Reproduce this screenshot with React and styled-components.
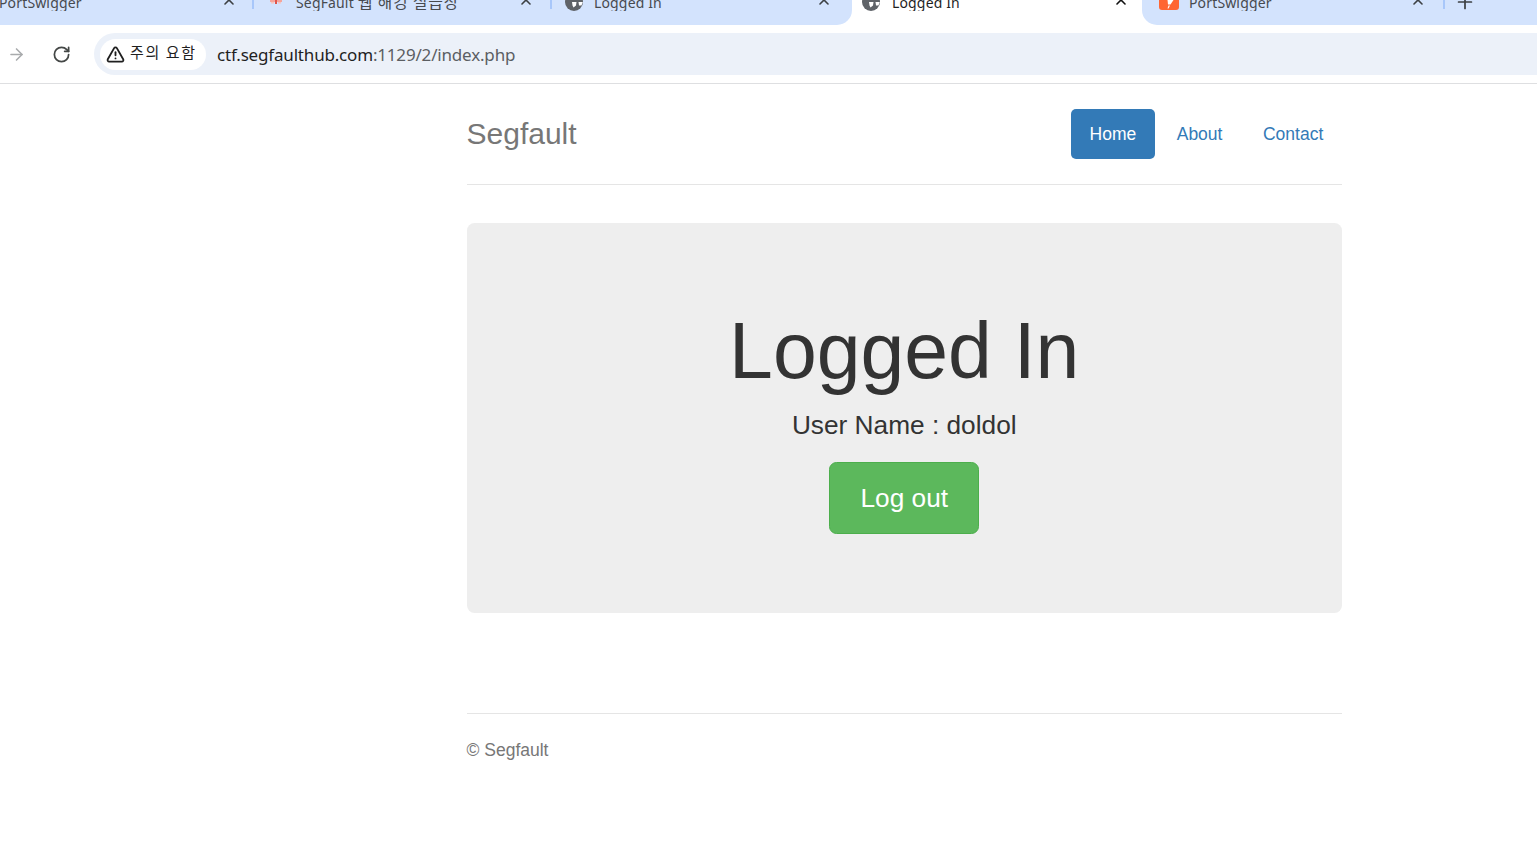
import React from "react";
import styled, { createGlobalStyle } from "styled-components";
import { ArrowRight, RotateCw, TriangleAlert, X, Plus } from "lucide-react";

const GlobalStyle = createGlobalStyle`
  html, body {
    margin: 0;
    padding: 0;
    background: #fff;
    overflow: hidden;
  }
  body {
    font-family: "Liberation Sans", Arial, sans-serif;
    color: #333;
  }
`;

const TabStrip = styled.div`
  display: flex;
  height: 25px;
  overflow: hidden;
  background: #fff;
`;

const TabGroup = styled.div`
  display: flex;
  flex: ${({ $grow }) => ($grow ? "1" : "none")};
  background: #d3e3fd;
  border-radius: ${({ $corner }) =>
    $corner === "right" ? "0 0 15px 0" : $corner === "left" ? "0 0 0 15px" : "0"};
`;

const Tab = styled.div`
  display: flex;
  align-items: flex-end;
  box-sizing: border-box;
  width: ${({ $width }) => $width}px;
  height: 25px;
  padding: 0 ${({ $right }) => $right}px 15px ${({ $left }) => $left}px;
  background: ${({ $active }) => ($active ? "#fff" : "transparent")};
`;

const TabLabel = styled.span`
  display: block;
  flex: 1;
  height: 16px;
  margin-left: ${({ $gap }) => $gap}px;
  margin-bottom: -1px;
  overflow: hidden;
  font-family: "Noto Sans", "Noto Sans CJK KR", sans-serif;
  font-size: 14px;
  line-height: 16px;
  letter-spacing: 0.15px;
  white-space: nowrap;
  color: ${({ $active }) => ($active ? "#1f1f1f" : "#474a4f")};
`;

const TabLabelKorean = styled.span`
  font-family: "Noto Sans CJK KR", sans-serif;
  font-size: 16px;
  line-height: 0;
  letter-spacing: 0.75px;
`;

const TabClose = styled(X)`
  flex: none;
  width: 16px;
  height: 16px;
  margin-bottom: 2px;
  stroke-width: 2.4;
  color: ${({ $active }) => ($active ? "#111" : "#3c4043")};
`;

const TabSeparator = styled.div`
  flex: none;
  width: 2px;
  height: 9px;
  background: #a8c7fa;
`;

const NewTab = styled(Plus)`
  flex: none;
  width: 22px;
  height: 22px;
  margin: -9px 0 0 9px;
  stroke-width: 1.9;
  color: #3c4043;
`;

const FaviconBox = styled.svg`
  flex: none;
  display: block;
  margin-bottom: ${({ $lift }) => $lift}px;
`;

const Toolbar = styled.div`
  display: flex;
  align-items: center;
  box-sizing: border-box;
  height: 59px;
  padding: 8px 0 8px 7px;
  background: #fff;
  border-bottom: 1px solid #dedfe1;
`;

const BackArrow = styled(ArrowRight)`
  flex: none;
  width: 19px;
  height: 19px;
  color: #a9abad;
`;

const Reload = styled(RotateCw)`
  flex: none;
  width: 19px;
  height: 19px;
  margin-left: 26px;
  stroke-width: 2.2;
  color: #444746;
`;

const AddressBar = styled.div`
  flex: 1;
  display: flex;
  align-items: center;
  height: 42px;
  margin-left: 23px;
  padding-left: 6px;
  border-radius: 21px 0 0 21px;
  background: #ecf1f9;
`;

const SecurityChip = styled.div`
  display: flex;
  align-items: center;
  box-sizing: border-box;
  width: 106px;
  height: 31px;
  padding-left: 6px;
  border-radius: 16px;
  background: #fff;
`;

const ChipIcon = styled(TriangleAlert)`
  flex: none;
  width: 19px;
  height: 19px;
  margin-right: 5px;
  stroke-width: 2.3;
  color: #1f1f1f;
`;

const ChipText = styled.span`
  margin-bottom: 5px;
  font-family: "Noto Sans CJK KR", "Noto Sans", sans-serif;
  font-size: 15px;
  letter-spacing: 1.6px;
  white-space: nowrap;
  color: #1f1f1f;
`;

const Url = styled.div`
  margin-left: 11px;
  font-family: "Noto Sans", sans-serif;
  font-size: 17px;
  letter-spacing: -0.18px;
  white-space: nowrap;
  color: #5b5e63;
`;

const UrlHost = styled.span`
  color: #1f1f1f;
`;

const Container = styled.div`
  box-sizing: border-box;
  width: 875.5px;
  margin-left: 466.5px;
`;

const Header = styled.header`
  display: flex;
  align-items: center;
  justify-content: space-between;
  padding: 25px 0 25px;
  border-bottom: 1px solid #e5e5e5;
`;

const Brand = styled.h3`
  margin: 0;
  font-size: 30px;
  font-weight: 400;
  line-height: 50px;
  color: #777;
`;

const Nav = styled.nav`
  display: flex;
  gap: 3px;
`;

const NavLink = styled.a`
  display: block;
  padding: 0 18.75px;
  font-size: 17.5px;
  line-height: 50px;
  border-radius: 5px;
  color: ${({ $active }) => ($active ? "#fff" : "#337ab7")};
  background: ${({ $active }) => ($active ? "#337ab7" : "transparent")};
`;

const Jumbotron = styled.section`
  box-sizing: border-box;
  height: 390px;
  margin-top: 38px;
  padding-top: 85px;
  border-radius: 7.5px;
  background: #eee;
  text-align: center;
`;

const Title = styled.h1`
  margin: 0;
  font-size: 78.75px;
  font-weight: 400;
  line-height: 86px;
  color: #333;
`;

const Lead = styled.p`
  margin: 12px 0 18px;
  font-size: 26.25px;
  line-height: 38px;
  color: #333;
`;

const LogoutButton = styled.a`
  display: inline-block;
  box-sizing: border-box;
  width: 150px;
  height: 72px;
  border: 1px solid #4cae4c;
  border-radius: 7.5px;
  background: #5cb85c;
  font-size: 26.25px;
  line-height: 70px;
  color: #fff;
`;

const Footer = styled.footer`
  margin-top: 100px;
  padding-top: 24px;
  border-top: 1px solid #e5e5e5;
  font-size: 17.5px;
  line-height: 25px;
  color: #777;
`;

function Globe() {
  return (
    <FaviconBox $lift={-1} width="18" height="18" viewBox="0 0 18 18">
      <circle cx="9" cy="9" r="9" fill="#5f6368" />
      <path d="M7 9 L11.5 9 L11 12.5 L8.5 14.5 L7.5 12.5 Z" fill="#fff" />
      <path d="M13.5 9 H17.8 L16.5 12.5 L14 12.5 Z" fill="#fff" />
    </FaviconBox>
  );
}

function SegfaultIcon() {
  return (
    <FaviconBox $lift={6} width="16" height="16" viewBox="0 0 16 16">
      <path d="M2 12 H14 V14 H2 Z" fill="#f5a59c" />
      <path d="M3 14 H6 V15.5 H3 Z M10 14 H13 V15.5 H10 Z" fill="#f9c4bd" />
      <path d="M7 12 H9 V16 H7 Z" fill="#e0554a" />
    </FaviconBox>
  );
}

function PortSwiggerIcon() {
  return (
    <FaviconBox $lift={0} width="20" height="20" viewBox="0 0 20 20">
      <rect width="20" height="20" rx="3" fill="#ff6633" />
      <path d="M8.5 10 H14.5 L11.5 14.5 H9 Z" fill="#fff" />
      <path d="M9.5 15.5 H11 L9.5 18.5 H8.5 Z" fill="#fff" />
    </FaviconBox>
  );
}

export default function App() {
  return (
    <>
      <GlobalStyle />
      <TabStrip>
        <TabGroup $corner="right">
          <Tab $width={252} $left={0} $right={15}>
            <TabLabel $gap={-1}>PortSwigger</TabLabel>
            <TabClose />
          </Tab>
          <TabSeparator />
          <Tab $width={296} $left={14} $right={16}>
            <SegfaultIcon />
            <TabLabel $gap={12}>
              SegFault <TabLabelKorean>웹 해킹 실습장</TabLabelKorean>
            </TabLabel>
            <TabClose />
          </Tab>
          <TabSeparator />
          <Tab $width={300} $left={13} $right={20}>
            <Globe />
            <TabLabel $gap={11}>Logged In</TabLabel>
            <TabClose />
          </Tab>
        </TabGroup>
        <Tab $active $width={290} $left={10} $right={13}>
          <Globe />
          <TabLabel $active $gap={12}>Logged In</TabLabel>
          <TabClose $active />
        </Tab>
        <TabGroup $grow $corner="left">
          <Tab $width={301} $left={17} $right={17}>
            <PortSwiggerIcon />
            <TabLabel $gap={10}>PortSwigger</TabLabel>
            <TabClose />
          </Tab>
          <TabSeparator />
          <NewTab />
        </TabGroup>
      </TabStrip>

      <Toolbar>
        <BackArrow />
        <Reload />
        <AddressBar>
          <SecurityChip>
            <ChipIcon />
            <ChipText>주의 요함</ChipText>
          </SecurityChip>
          <Url>
            <UrlHost>ctf.segfaulthub.com</UrlHost>:1129/2/index.php
          </Url>
        </AddressBar>
      </Toolbar>

      <Container>
        <Header>
          <Brand>Segfault</Brand>
          <Nav>
            <NavLink $active>Home</NavLink>
            <NavLink>About</NavLink>
            <NavLink>Contact</NavLink>
          </Nav>
        </Header>
        <Jumbotron>
          <Title>Logged In</Title>
          <Lead>User Name : doldol</Lead>
          <LogoutButton>Log out</LogoutButton>
        </Jumbotron>
        <Footer>© Segfault</Footer>
      </Container>
    </>
  );
}
